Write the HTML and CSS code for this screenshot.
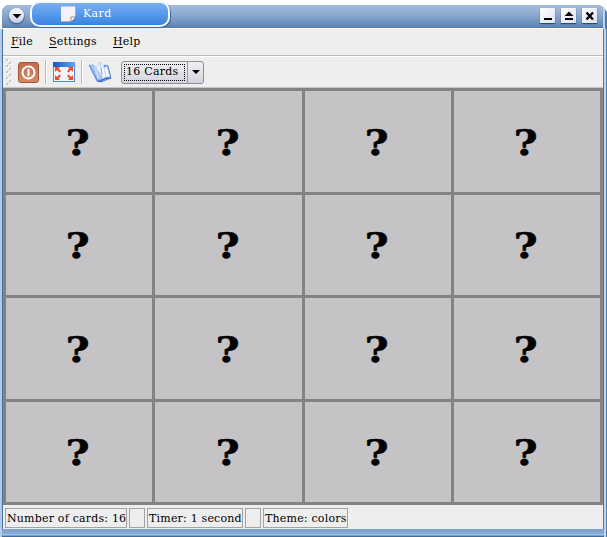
FILE: index.html
```
<!DOCTYPE html>
<html lang="en"><head><meta charset="utf-8"><title>Kard</title><link rel="stylesheet" href="styles.css"></head>
<body>
<div class="window">
<header class="titlebar">
<span class="orb"><svg width="14" height="14" viewBox="0 0 14 14"><path d="M2.500 5h9L7 9.500z"/></svg></span>
<div class="tab"><svg width="16" height="16" viewBox="0 0 16 16"><path d="M0 0h15v11l-5 5H0z" fill="#f4f2f6"/><path d="M0 .5h15" stroke="#c8c8ee"/><path d="M14.5 0v11M0 15.5h10" stroke="#b5a9ae"/><path d="M10 16v-5h5z" fill="#fff" stroke="#78717b" stroke-width=".8"/></svg><span class="t-title">Kard</span></div>
<div class="controls">
<span class="ctl"><svg width="15" height="15"><path d="M4 10h8v2H4z"/></svg></span>
<span class="ctl"><svg width="15" height="15"><path d="M3.5 8 8 3.500l4.500 4.500zM4 10h8v2H4z"/></svg></span>
<span class="ctl"><svg width="15" height="15"><path d="m4.500 4.500 6.500 7M11 4.500l-6.500 7" stroke="#000" stroke-width="2.400"/></svg></span>
</div>
</header>
<div class="content">
<nav class="menu"><span class="m-file"><u>F</u>ile</span><span class="m-settings"><u>S</u>ettings</span><span class="m-help"><u>H</u>elp</span></nav>
<div class="toolbar">
<svg class="grip" width="8" height="28" viewBox="0 0 8 28"><g fill="none" stroke="#b9b9b9" stroke-width="1.200"><path d="M0 3 2 1M0 9l2-2M0 15l2-2M0 21l2-2M0 27l2-2M3 6l2-2M3 12l2-2M3 18l2-2M3 24l2-2"/></g><g fill="none" stroke="#fff"><path d="M1 4 3 2M1 10l2-2M1 16l2-2M1 22l2-2M4 7l2-2M4 13l2-2M4 19l2-2M4 25l2-2"/></g></svg>
<svg class="quit" width="21" height="21" viewBox="0 0 21 21"><defs><linearGradient id="q" x2="0" y2="1"><stop stop-color="#c06a4c"/><stop offset="1" stop-color="#d48a64"/></linearGradient></defs><rect x=".5" y=".5" width="20" height="20" rx="2.500" fill="url(#q)" stroke="#a8543a"/><circle cx="10.500" cy="10.500" r="6" fill="none" stroke="#fff" stroke-width="2"/><path d="M10.500 7v7" stroke="#fff" stroke-width="2"/></svg>
<i class="sep"></i>
<svg class="full" width="22" height="20" viewBox="0 0 22 20"><defs><linearGradient id="b"><stop stop-color="#1457c8"/><stop offset="1" stop-color="#63a5f4"/></linearGradient></defs><path d="M0 0h22v20H0z" fill="#4a8be6"/><path d="M0 0h22v5H0z" fill="url(#b)"/><path d="M1 5h20v14H1z" fill="#f3f5fd"/><g fill="#f04a20"><path d="M2 5h5L5.500 6.500 8 9 6.500 10.500 4 8l-2 2zM20 5h-5l1.500 1.500L14 9l1.500 1.500L18 8l2 2zM2 18h5l-1.500-1.500L8 14l-1.500-1.500L4 15l-2-2zM20 18h-5l1.500-1.500L14 14l1.500-1.500L18 15l2-2z"/></g></svg>
<i class="sep sep2"></i>
<svg class="book" width="23" height="22" viewBox="0 0 23 22"><path d="M0 4 8 20l4 1 10-4-3-12-3-1-4 4z" fill="#78a7ee" stroke="#3f78cf" stroke-width=".8"/><path d="m1 4 3-1 9 15-4 1z" fill="#9fc6f8"/><path d="m4 4 3 2 5 12-4-1z" fill="#ccdefb" stroke="#8fb0e8" stroke-width=".5"/><path d="m7 7 4-6 2 17q-2-6-6-11z" fill="#eef1ff" stroke="#a4badf" stroke-width=".5"/><path d="M11 1q4 2 4 6l3-2 3 11q-5-1-8 3 1-9-2-18z" fill="#f5f6ff" stroke="#9eb8ec" stroke-width=".5"/><path d="m15 7 2 9" stroke="#c9d2f0"/><path d="M9 20q3 1 4-1 3-2 9-2" fill="none" stroke="#2863bf" stroke-width="1.200"/></svg>
<div class="combo"><div class="value"><span>16 Cards</span></div><div class="arrow"><svg width="8" height="4"><path d="M0 0h8L4 4z"/></svg></div></div>
</div>
<main class="board">
<div><b>?</b></div><div><b>?</b></div><div><b>?</b></div><div><b>?</b></div><div><b>?</b></div><div><b>?</b></div><div><b>?</b></div><div><b>?</b></div><div><b>?</b></div><div><b>?</b></div><div><b>?</b></div><div><b>?</b></div><div><b>?</b></div><div><b>?</b></div><div><b>?</b></div><div><b>?</b></div>
</main>
<footer class="status"><span class="s1">Number of cards: 16</span><span class="gap"></span><span class="s2">Timer: 1 second</span><span class="gap"></span><span class="s3">Theme: colors</span></footer>
</div>
<div class="bottom"></div>
</div>
</body></html>
```
FILE: styles.css
```
*{box-sizing:border-box}
body{margin:0;width:607px;height:537px;overflow:hidden;background:#fff;font:11px/14px "DejaVu Serif",serif;letter-spacing:.2px;color:#000}
svg{display:block;flex:none}
.window{width:607px;height:537px;display:flex;flex-direction:column;background:linear-gradient(90deg,#b3c9e8 0 2px,#47709f 2px 3px,#4774aa 3px 603px,#4a78b0 603px 604px,#c0d4f0 604px 606px,#567dab 606px);clip-path:path("M0 537V29H2V12Q3 5 10 5H30V0H172V5H597Q607 6 607 16V537Z")}
.titlebar{height:29px;display:flex;flex:none;background:linear-gradient(90deg,transparent 0 603px,#c0d4f0 603px 605px,#4a78b0 605px),linear-gradient(#fff 0 5px,#a4bcdc 5px,#91aed2 13px,#6389b8 26px,#4f77a8 28px,#fff 28px);padding-left:9px}
.orb{width:15px;height:15px;margin-top:8px;border-radius:50%;background:linear-gradient(#fff,#c9cfe4);box-shadow:0 1px 2px #284e7c;display:grid;place-items:center}
.tab{width:140px;height:26px;margin:1px 0 0 6px;border:2px solid #f6faff;border-radius:10px;background:linear-gradient(#7caef0,#579aec 50%,#3984df);box-shadow:1px 1px 1px #3868a0;display:flex;align-items:center;padding:1px 0 2px 29px;color:#fff}
.t-title{margin-left:6px;font-size:11px;letter-spacing:.4px}
.controls{display:flex;gap:6px;margin:8px 10px 0 auto}
.ctl{width:15px;height:15px;background:linear-gradient(135deg,#fff,#dfe1ef);box-shadow:0 1px 1px #214f85}
.content{width:600px;margin-left:3px;background:#eee;height:500px;flex:none}
.menu{height:27px;display:flex;border-bottom:1px solid #bdbdbd;padding:6px 0 0 8px}
.menu u{text-decoration-thickness:1px;text-underline-offset:2px}
.m-file{width:38px}.m-settings{width:64px}
.toolbar{height:32px;border-top:1px solid #fff;border-bottom:1px solid #c6c6c6;display:flex;align-items:center;padding-left:3px}
.quit{margin-left:4px}
.sep{width:2px;height:24px;border-left:1px solid #bababa;border-right:1px solid #fff;margin:0 6px}
.book{margin-right:1px}
.combo{width:83px;height:23px;margin-left:8px;border:1px solid #8d8d94;border-radius:3px;background:linear-gradient(#eeeef3,#d4d4de);display:flex}
.value{width:66px;border-right:1px solid #999;padding:2px}
.value span{display:block;height:17px;border:1px dotted #000;padding-left:1px;line-height:14px;white-space:nowrap;letter-spacing:.25px}
.arrow{flex:1;display:grid;place-items:center}
.board{height:417px;background:#848284;padding:3px;display:grid;grid-template-columns:146px 147px 146px 146px;grid-template-rows:101px 100px 101px 100px;gap:3px}
.board div{background:#c6c3c6;display:grid;place-items:center;font-size:36px;line-height:38px;letter-spacing:0}
.board b{transform:translateX(-1px) scaleX(1.13);-webkit-text-stroke:.6px #000}
.status{height:24px;padding:3px 2px 1px;display:flex;gap:2px}
.status span{border:1px solid #a3a3a3;height:20px;white-space:nowrap;line-height:19px;padding-left:1px}
.s1{width:122px}.gap{width:16px}.s2{width:96px}.s3{width:85px}
.bottom{height:8px;margin-left:2px;width:602px;background:linear-gradient(#7b9fc9,#8aafda 5px,#b8d2f3 6px,#416b99 7px)}
```
